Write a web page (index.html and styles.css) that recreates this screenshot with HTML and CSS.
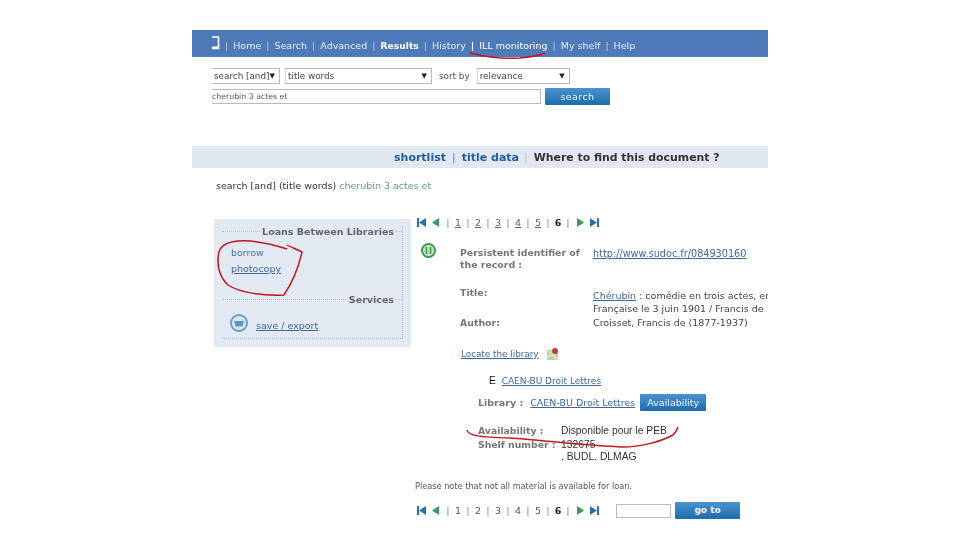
FILE: index.html
```html
<!DOCTYPE html>
<html lang="en">
<head>
    <meta charset="UTF-8">
    <title>Where to find this document</title>
    <link rel="stylesheet" href="styles.css">
</head>
<body>
<div class="shot">
    <div class="topnav">
        <svg class="phone" width="9" height="14" viewBox="0 0 9 14"><path d="M1 1H7.5V12.5H1" fill="none" stroke="#fff" stroke-width="1.6"/><path d="M1 10.5H8V13H1Z" fill="#fff"/></svg>
        <span class="sep">|</span><a>Home</a>
        <span class="sep">|</span><a>Search</a>
        <span class="sep">|</span><a>Advanced</a>
        <span class="sep">|</span><a class="on">Results</a>
        <span class="sep">|</span><a>History</a>
        <span class="sep strong">|</span><a class="ill">ILL monitoring</a>
        <span class="sep">|</span><a>My shelf</a>
        <span class="sep">|</span><a>Help</a>
    </div>

    <div class="searchform">
        <div class="row">
            <div class="sel sel-op">search [and]<i>▼</i></div>
            <div class="sel sel-field">title words<i>▼</i></div>
            <span class="sortby">sort by</span>
            <div class="sel sel-sort">relevance<i>▼</i></div>
        </div>
        <div class="row row2">
            <div class="query">cherubin 3 actes et</div>
            <div class="btn btn-search">search</div>
        </div>
    </div>

    <div class="tabs">
        <a>shortlist</a><span class="bar">|</span><a>title data</a><span class="bar thin">|</span><b>Where to find this document ?</b>
    </div>

    <p class="crumb">search [and] (title words) <span>cherubin 3 actes et</span></p>

    <div class="cols">
        <div class="side">
            <div class="box">
                <div class="boxtitle"><span>Loans Between Libraries</span></div>
                <div class="plain">borrow</div>
                <a class="lnk photo">photocopy</a>
            </div>
            <div class="box box2">
                <div class="boxtitle"><span>Services</span></div>
                <div class="save">
                    <svg width="18" height="18" viewBox="0 0 18 18"><circle cx="9" cy="9" r="8" fill="#dfe8f2" stroke="#6d9cc4" stroke-width="2"/><path d="M4 7H14L12.5 12.5H5.5Z" fill="#5f94c0"/></svg>
                    <a class="lnk">save / export</a>
                </div>
            </div>
        </div>

        <div class="main">
            <div class="pager pager-top">
                <svg class="arr" width="9" height="9" viewBox="0 0 9 9"><path d="M0 0H2V9H0ZM9 0V9L2 4.5Z" fill="#2f6fa8"/></svg>
                <svg class="arr prev" width="7" height="9" viewBox="0 0 7 9"><path d="M7 0V9L0 4.5Z" fill="#3d9a6c"/></svg>
                <span class="sep">|</span><a class="lnk">1</a>
                <span class="sep">|</span><a class="lnk">2</a>
                <span class="sep">|</span><a class="lnk">3</a>
                <span class="sep">|</span><a class="lnk">4</a>
                <span class="sep">|</span><a class="lnk">5</a>
                <span class="sep">|</span><b>6</b>
                <span class="sep">|</span>
                <svg class="arr next" width="7" height="9" viewBox="0 0 7 9"><path d="M0 0V9L7 4.5Z" fill="#3d9a6c"/></svg>
                <svg class="arr" width="9" height="9" viewBox="0 0 9 9"><path d="M0 0V9L7 4.5ZM7 0H9V9H7Z" fill="#2f6fa8"/></svg>
            </div>

            <div class="record">
                <svg class="pin" width="15" height="15" viewBox="0 0 15 15"><circle cx="7.5" cy="7.5" r="6.5" fill="#c9e3c4" stroke="#3f9a4a" stroke-width="2"/><path d="M5.5 4V11M9.5 4V11" stroke="#3f9a4a" stroke-width="1.6"/></svg>
                <div class="fields">
                    <div class="lab">Persistent identifier of the record :</div>
                    <div class="val val-url"><a class="lnk">http://www.sudoc.fr/084930160</a></div>
                    <div class="lab lab-title">Title:</div>
                    <div class="val val-title"><a class="lnk">Chérubin</a> : comédie en trois actes, en<br>Française le 3 juin 1901 / Francis de</div>
                    <div class="lab author">Author:</div>
                    <div class="val author">Croisset, Francis de (1877-1937)</div>
                </div>
            </div>

            <div class="locate">
                <a class="lnk">Locate the library</a>
                <svg width="12" height="12" viewBox="0 0 12 12"><path d="M0 2H11V12H0Z" fill="#b9d3a6"/><path d="M0 10L10 2M2 3L11 12" stroke="#e8dfb8" stroke-width="2"/><circle cx="8" cy="3" r="3" fill="#b8413c"/></svg>
            </div>

            <div class="holding">
                <div class="lib-head"><span class="letter">E</span><a class="lnk">CAEN-BU Droit Lettres</a></div>
                <div class="lib-row">
                    <span class="hl">Library :</span>
                    <a class="lnk">CAEN-BU Droit Lettres</a>
                    <div class="btn btn-avail">Availability</div>
                </div>
                <div class="avail">
                    <span class="hl">Availability :</span><span>Disponible pour le PEB</span>
                    <span class="hl">Shelf number :</span><span class="shelf">132675<br>. BUDL. DLMAG</span>
                </div>
            </div>

            <p class="note">Please note that not all material is available for loan.</p>

            <div class="pager pager-bottom">
                <svg class="arr" width="9" height="9" viewBox="0 0 9 9"><path d="M0 0H2V9H0ZM9 0V9L2 4.5Z" fill="#2f6fa8"/></svg>
                <svg class="arr prev" width="7" height="9" viewBox="0 0 7 9"><path d="M7 0V9L0 4.5Z" fill="#3d9a6c"/></svg>
                <span class="sep">|</span><a>1</a>
                <span class="sep">|</span><a>2</a>
                <span class="sep">|</span><a>3</a>
                <span class="sep">|</span><a>4</a>
                <span class="sep">|</span><a>5</a>
                <span class="sep">|</span><b>6</b>
                <span class="sep">|</span>
                <svg class="arr next" width="7" height="9" viewBox="0 0 7 9"><path d="M0 0V9L7 4.5Z" fill="#3d9a6c"/></svg>
                <svg class="arr" width="9" height="9" viewBox="0 0 9 9"><path d="M0 0V9L7 4.5ZM7 0H9V9H7Z" fill="#2f6fa8"/></svg>
                <div class="gobox"></div>
                <div class="btn btn-go">go to</div>
            </div>
        </div>
    </div>
</div>

<!-- red pen marks over the screenshot -->
<svg class="ink" width="960" height="540" viewBox="0 0 960 540">
    <path d="M470 53C490 58 505 59 520 58C530 57 540 56 545 53"/>
    <path d="M287 249C275 245 262 242 250 241C235 240 222 242 219 252C216 265 220 278 228 285C240 293 265 296 284 295C292 283 298 270 302 252C297 249 290 247 287 245"/>
    <path d="M467 430C468 436 480 437 510 438C540 440 590 446 623 447C640 447 660 442 673 435C676 432 677 430 678 427"/>
</svg>
</body>
</html>
```

FILE: styles.css
```css
html, body {
    margin: 0;
    height: 100%;
    overflow: hidden;
    background: #fff;
}
body {
    font-family: "DejaVu Sans", Verdana, sans-serif;
    font-size: 9.5px;
    color: #333;
}
p {
    margin: 0;
}
.shot {
    width: 576px;
    height: 510px;
    margin: 30px 0 0 192px;
    overflow: hidden;
    filter: blur(.35px);
}
.ink {
    position: absolute;
    left: 0;
    top: 0;
    fill: none;
    stroke: #c4161c;
    stroke-width: 1.5;
}

/* top bar */
.topnav {
    height: 27px;
    box-sizing: border-box;
    padding: 4px 0 0 19px;
    background: #4d7ab9;
    display: flex;
    align-items: center;
    color: #e8eef7;
    white-space: nowrap;
}
.topnav .sep {
    margin: 0 5px;
    color: #b9cce4;
}
.topnav .strong {
    color: #fff;
    font-weight: bold;
}
.topnav .on {
    font-weight: bold;
    color: #fff;
    font-size: 9.2px;
}
.topnav .ill {
    color: #fff;
}
.phone {
    margin-top: -5px;
}

/* search form */
.searchform {
    padding: 11px 0 0 20px;
    font-size: 8.8px;
}
.row {
    display: flex;
    align-items: center;
}
.row2 {
    margin-top: 4px;
}
.sel {
    height: 16px;
    box-sizing: border-box;
    border: 1px solid #bbb;
    border-left-color: #ddd;
    padding-left: 2px;
    line-height: 14px;
    position: relative;
    color: #444;
}
.sel i {
    position: absolute;
    right: 4px;
    top: 0;
    font-style: normal;
    font-size: 7px;
    color: #222;
}
.sel-op {
    width: 68px;
    border-left: 0;
}
.sel-field {
    width: 147px;
    margin-left: 5px;
}
.sortby {
    margin: 0 7px;
    color: #555;
}
.sel-sort {
    width: 93px;
}
.query {
    width: 329px;
    height: 15px;
    box-sizing: border-box;
    border: 1px solid #bbb;
    border-left: 0;
    line-height: 14px;
    font-size: 7.8px;
    color: #555;
}
.btn {
    color: #eef4fb;
    text-align: center;
    background: linear-gradient(#4a93cf, #1f6cab);
    border-radius: 1px;
}
.btn-search {
    width: 65px;
    height: 17px;
    line-height: 17px;
    margin-left: 4px;
    font-size: 9.5px;
    letter-spacing: .4px;
}

/* tabs */
.tabs {
    margin-top: 41px;
    height: 22px;
    box-sizing: border-box;
    padding: 1px 0 0 202px;
    background: #e1e8f2;
    display: flex;
    align-items: center;
    font-size: 11px;
    font-weight: bold;
    color: #1f5f9f;
    white-space: nowrap;
}
.tabs .bar {
    margin: 0 6px;
    color: #5b8bb8;
    font-weight: normal;
}
.tabs .thin {
    color: #b5c6da;
    margin-left: 5px;
}
.tabs b {
    color: #333;
    font-size: 10.9px;
}
.crumb {
    margin: 12px 0 0 24px;
    line-height: 12px;
    color: #333;
}
.crumb span {
    color: #5f9c95;
}

/* two columns */
.cols {
    display: flex;
    margin-top: 27px;
}
.side {
    width: 197px;
    height: 128px;
    margin-left: 22px;
    background: #e3e9f3;
    box-sizing: border-box;
    padding: 7px 8px 0;
    flex: none;
}
.box {
    height: 67px;
    border-right: 1px dotted #b7c0cc;
}
.box2 {
    height: 44px;
    margin-top: 1px;
    border-bottom: 1px dotted #b7c0cc;
}
.boxtitle {
    text-align: right;
    height: 11px;
    line-height: 11px;
    position: relative;
    font-weight: bold;
    color: #666;
    font-size: 9.5px;
}
.boxtitle::before {
    content: "";
    position: absolute;
    left: 0;
    right: 0;
    top: 5px;
    border-top: 1px dotted #b7c0cc;
}
.boxtitle span {
    position: relative;
    background: #e3e9f3;
    padding: 0 0 0 2px;
    margin-right: 8px;
}
.plain {
    margin: 10px 0 0 9px;
    color: #4a6fa0;
}
.lnk {
    color: #3f6797;
    text-decoration: underline;
}
.photo {
    display: block;
    margin: 5px 0 0 9px;
    font-size: 9.5px;
}
.save {
    display: flex;
    align-items: center;
    gap: 8px;
    margin: 9px 0 0 8px;
}
.save .lnk {
    margin-top: 4px;
}

/* main column */
.main {
    width: 360px;
    margin: -2px 0 0 6px;
    flex: none;
}
.pager {
    display: flex;
    align-items: center;
    white-space: nowrap;
    color: #555;
}
.pager .sep {
    width: 10px;
    text-align: center;
    color: #777;
    font-size: 8.5px;
}
.pager a, .pager b {
    width: 10px;
    text-align: center;
}
.pager b {
    color: #222;
}
.pager .arr.prev {
    margin: 0 4px 0 6px;
}
.pager .arr.next {
    margin: 0 6px 0 4px;
}
.record {
    display: flex;
    margin-top: 15px;
    padding-left: 4px;
}
.pin {
    flex: none;
}
.fields {
    margin-left: 24px;
    padding-top: 4px;
    display: grid;
    grid-template-columns: 133px 400px;
}
.lab {
    font-weight: bold;
    font-size: 9.4px;
    line-height: 12px;
    color: #777;
    width: 124px;
}
.val {
    color: #444;
    white-space: nowrap;
    line-height: 13px;
}
.val-url {
    font-size: 9.7px;
}
.lab-title {
    margin-top: 16px;
}
.val-title {
    margin-top: 18px;
}
.author {
    margin-top: 1px;
}
.lab.author {
    margin-top: 2px;
}
.locate {
    display: flex;
    align-items: center;
    gap: 8px;
    margin: 19px 0 0 44px;
    font-size: 8.8px;
}
.holding {
    margin: 15px 0 0 61px;
}
.lib-head {
    margin-left: 11px;
    line-height: 12px;
    font-size: 9px;
    display: flex;
    gap: 6px;
}
.letter {
    color: #111;
    font-family: "Liberation Sans", Arial, sans-serif;
    font-size: 10px;
}
.lib-row {
    display: flex;
    align-items: center;
    gap: 7px;
    margin-top: 7px;
}
.hl {
    font-weight: bold;
    color: #777;
}
.btn-avail {
    width: 66px;
    height: 17px;
    line-height: 17px;
    margin-left: -2px;
}
.avail {
    display: grid;
    grid-template-columns: 83px auto;
    margin-top: 13px;
    line-height: 14px;
    color: #333;
    font-family: "Liberation Sans", Arial, sans-serif;
    font-size: 10.3px;
}
.avail .hl {
    font-family: "DejaVu Sans", Verdana, sans-serif;
    font-size: 9.3px;
}
.shelf {
    margin-top: 1px;
    line-height: 11.5px;
}
.note {
    margin: 18px 0 0 -2px;
    font-size: 8.2px;
    color: #555;
    line-height: 12px;
}
.pager-bottom {
    margin-top: 10px;
}
.gobox {
    width: 53px;
    height: 12px;
    border: 1px solid #bbb;
    margin-left: 17px;
}
.btn-go {
    width: 65px;
    height: 17px;
    line-height: 17px;
    margin-left: 4px;
    font-weight: bold;
    font-size: 9px;
}
```
